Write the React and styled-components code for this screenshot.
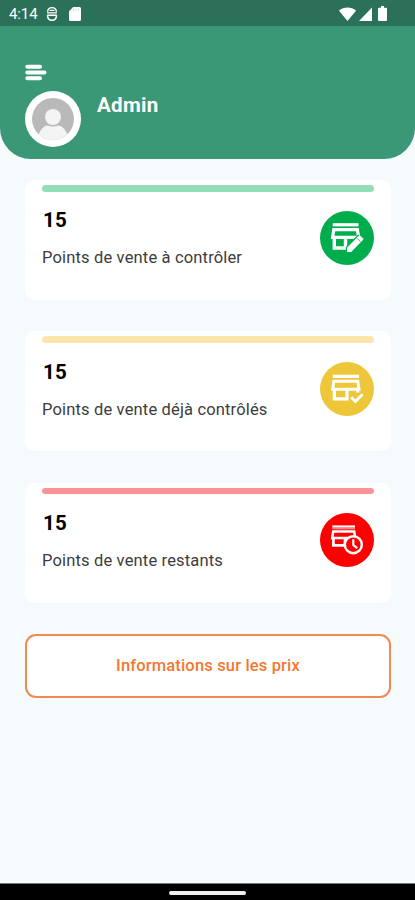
import React from "react";
import styled, { createGlobalStyle } from "styled-components";

const GlobalStyle = createGlobalStyle`
  * {
    box-sizing: border-box;
  }
  body {
    margin: 0;
    background: #f5fafd;
    font-family: Roboto, "Noto Sans", sans-serif;
  }
`;

const Screen = styled.div`
  width: 100%;
  height: 900px;
  display: flex;
  flex-direction: column;
  overflow: hidden;
  background: #f5fafd;
`;

const StatusBar = styled.div`
  height: 26px;
  flex: none;
  display: flex;
  align-items: center;
  padding: 1px 28px 0 9px;
  background: #2b7159;
  color: #ffffff;
`;

const Clock = styled.span`
  width: 37px;
  font-size: 15px;
  line-height: 26px;
  letter-spacing: -0.1px;
`;

const StatusIcons = styled.div`
  display: flex;
  align-items: center;
  gap: ${({ $gap }) => $gap}px;
  margin-left: ${({ $right }) => ($right ? "auto" : "0")};
`;

const Header = styled.header`
  height: 133px;
  flex: none;
  padding: 38px 25px 0;
  background: #3b9876;
  border-radius: 0 0 31px 31px;
`;

const MenuButton = styled.button`
  display: block;
  width: 22px;
  height: 17px;
  padding: 0;
  border: none;
  background: none;
`;

const Profile = styled.div`
  display: flex;
  align-items: flex-start;
  gap: 16px;
  margin-top: 10px;
`;

const Avatar = styled.div`
  width: 56px;
  height: 56px;
  padding: 7px;
  border-radius: 50%;
  background: #ffffff;
`;

const UserName = styled.h1`
  margin: 2px 0 0;
  font-size: 20.5px;
  line-height: 25px;
  font-weight: 700;
  letter-spacing: 0.3px;
  color: #ffffff;
`;

const Content = styled.main`
  flex: 1;
  display: flex;
  flex-direction: column;
  gap: 31.3px;
  padding: 21px 24px 0 25px;
`;

const Card = styled.section`
  height: 120px;
  flex: none;
  padding: 5.2px 17px 0;
  border-radius: 10px;
  background: #ffffff;
`;

const CardBar = styled.div`
  height: 6.5px;
  border-radius: 4px;
  background: ${({ $color }) => $color};
`;

const CardBody = styled.div`
  display: flex;
  justify-content: space-between;
`;

const Count = styled.p`
  margin: 16.8px 0 0 1px;
  font-size: 20.5px;
  line-height: 24px;
  font-weight: 700;
  letter-spacing: 0.2px;
  color: #000000;
`;

const Label = styled.p`
  margin: 16px 0 0;
  font-size: 16.5px;
  line-height: 20px;
  letter-spacing: 0.16px;
  color: #3c3c3c;
`;

const Badge = styled.div`
  width: 54px;
  height: 54px;
  margin-top: 19px;
  border-radius: 50%;
  background: ${({ $color }) => $color};
`;

const PriceButton = styled.button`
  height: 64px;
  flex: none;
  padding: 0;
  border: 2px solid #f08a50;
  border-radius: 11px;
  background: #ffffff;
  font-family: inherit;
  font-size: 16.5px;
  font-weight: 500;
  letter-spacing: 0.16px;
  color: #f5772f;
`;

const NavBar = styled.div`
  height: 17px;
  flex: none;
  display: flex;
  justify-content: center;
  padding-top: 7px;
  border-top: 1px solid #777a7b;
  background: #000000;
`;

const NavHandle = styled.div`
  width: 77px;
  height: 3.5px;
  border-radius: 2px;
  background: #f0f0ee;
`;

const FaceIcon = () => (
  <svg width="12" height="16" viewBox="0 0 12 16" fill="none" stroke="#fff">
    <path d="M1.6 5.8C1.8 3 3.3 1.6 6 1.6s4.200 1.400 4.400 4.200" strokeWidth="1.4" />
    <path d="M3.500 4.300h5M1 6.900h10" strokeWidth="1.300" />
    <path d="M1.300 9.300h9.400M1.500 9.300c0 3.300 1.700 5 4.500 5s4.500-1.700 4.500-5" strokeWidth="1.500" />
  </svg>
);

const SdCardIcon = () => (
  <svg width="12" height="14" viewBox="0 0 12 14">
    <path d="M4.2 0H10.5Q12 0 12 1.5V12.5Q12 14 10.5 14H1.5Q0 14 0 12.5V4.3z" fill="#fff" />
    <path d="M4.5 1.8v2M6.8 1.8v2M9.1 1.8v2" stroke="#b9d3ca" strokeWidth="0.8" />
  </svg>
);

const WifiIcon = () => (
  <svg width="17" height="14" viewBox="0 0 17 14">
    <path d="M8.5 14L0 3.7C4.7-.7 12.3-.7 17 3.7z" fill="#fff" />
  </svg>
);

const SignalIcon = () => (
  <svg width="13" height="14" viewBox="0 0 13 14">
    <path d="M13 0.5V14H0z" fill="#fff" />
  </svg>
);

const BatteryIcon = () => (
  <svg width="9" height="15" viewBox="0 0 9 15">
    <path d="M3 0h3v1.7h2Q9 1.7 9 2.7V14Q9 15 8 15H1Q0 15 0 14V2.7Q0 1.7 1 1.7h2z" fill="#fff" />
  </svg>
);

const MenuIcon = () => (
  <svg width="22" height="17" viewBox="0 0 22 17">
    <path
      d="M2.3 2.7H15M2.3 8.5H19.5M2.3 14.3H15"
      stroke="#fff"
      strokeWidth="4"
      strokeLinecap="round"
    />
  </svg>
);

const AvatarIcon = () => (
  <svg width="42" height="42" viewBox="0 0 42 42">
    <defs>
      <clipPath id="avatar">
        <circle cx="21" cy="21" r="21" />
      </clipPath>
    </defs>
    <g clipPath="url(#avatar)">
      <rect width="42" height="42" fill="#b9b9b9" />
      <circle cx="21" cy="19" r="8" fill="#f4f4f4" />
      <path d="M5 42C7 32 12 27.5 16 27.5c3 1.4 7 1.4 10 0 4 0 9 4.5 11 14.5z" fill="#f4f4f4" />
    </g>
  </svg>
);

const StoreEdit = () => (
  <svg width="54" height="54" viewBox="0 0 54 54" fill="none" stroke="#fff">
    <path d="M12.7 13.8H38.5" strokeWidth="3.2" />
    <path d="M13.8 18.7H37.4L38.6 26.3H12.6z" strokeWidth="3.2" />
    <path d="M14.3 26V37H25.5V26" strokeWidth="3.4" />
    <path d="M37.2 26V29.5" strokeWidth="3" />
    <path
      d="M27 40.9V36.8L38.2 25.3 42.5 29.4 31.2 40.9z"
      fill="#fff"
      stroke="#00ad4d"
      strokeWidth="2.4"
      paintOrder="stroke"
    />
    <path d="M37.4 26.5L39.8 24.2 43.7 28 41.3 30.3z" fill="#fff" stroke="none" />
    <path d="M37 27.2L40.6 30.8" stroke="#00ad4d" strokeWidth="0.8" />
  </svg>
);

const StoreCheck = () => (
  <svg width="54" height="54" viewBox="0 0 54 54" fill="none" stroke="#fff">
    <path d="M12.7 14.3H39" strokeWidth="3.2" />
    <path d="M13.8 19.3H37.8L39 27.2H12.6z" strokeWidth="3" />
    <path d="M14.3 27V36.9H27V27" strokeWidth="3.2" />
    <path d="M37.7 27V30.5" strokeWidth="3" />
    <path d="M31.4 35.6L35.4 39.5L42.6 32.2" stroke="#edc739" strokeWidth="5.5" />
    <path d="M31.2 35.3L35.4 39.5L42.6 32.2" strokeWidth="2.9" />
  </svg>
);

const StoreClock = () => (
  <svg width="54" height="54" viewBox="0 0 54 54" fill="none" stroke="#fff">
    <path d="M12.3 13.4H35" strokeWidth="2" />
    <path d="M12.3 15.4H35" strokeWidth="2" opacity="0.5" />
    <path d="M13.2 18.4H34.2L35.2 25H12.2z" strokeWidth="2.5" />
    <path d="M13.4 25V32.4H25V25" strokeWidth="2.7" />
    <circle cx="33.3" cy="31.7" r="8.5" fill="#fe0000" strokeWidth="2.5" />
    <path d="M33.3 26.3V32L37.2 35.2" strokeWidth="2.2" />
  </svg>
);

const stats = [
  {
    count: 15,
    label: "Points de vente à contrôler",
    bar: "#93deb8",
    color: "#00ad4d",
    icon: <StoreEdit />,
  },
  {
    count: 15,
    label: "Points de vente déjà contrôlés",
    bar: "#fde5ab",
    color: "#edc739",
    icon: <StoreCheck />,
  },
  {
    count: 15,
    label: "Points de vente restants",
    bar: "#ff9297",
    color: "#fe0000",
    icon: <StoreClock />,
  },
];

export default function App() {
  return (
    <Screen>
      <GlobalStyle />
      <StatusBar>
        <Clock>4:14</Clock>
        <StatusIcons $gap={11}>
          <FaceIcon />
          <SdCardIcon />
        </StatusIcons>
        <StatusIcons $gap={3} $right>
          <WifiIcon />
          <SignalIcon />
          <span />
          <BatteryIcon />
        </StatusIcons>
      </StatusBar>

      <Header>
        <MenuButton aria-label="Menu">
          <MenuIcon />
        </MenuButton>
        <Profile>
          <Avatar>
            <AvatarIcon />
          </Avatar>
          <UserName>Admin</UserName>
        </Profile>
      </Header>

      <Content>
        {stats.map((stat) => (
          <Card key={stat.label}>
            <CardBar $color={stat.bar} />
            <CardBody>
              <div>
                <Count>{stat.count}</Count>
                <Label>{stat.label}</Label>
              </div>
              <Badge $color={stat.color}>{stat.icon}</Badge>
            </CardBody>
          </Card>
        ))}
        <PriceButton>Informations sur les prix</PriceButton>
      </Content>

      <NavBar>
        <NavHandle />
      </NavBar>
    </Screen>
  );
}
